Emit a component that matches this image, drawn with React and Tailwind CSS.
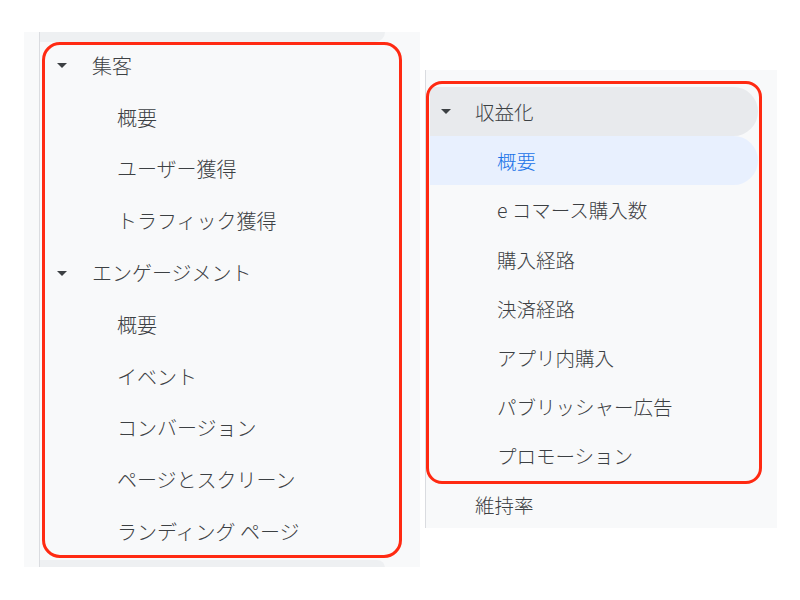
import React from "react";

const leftItems = [
  { label: "集客", header: true },
  { label: "概要" },
  { label: "ユーザー獲得" },
  { label: "トラフィック獲得" },
  { label: "エンゲージメント", header: true },
  { label: "概要" },
  { label: "イベント" },
  { label: "コンバージョン" },
  { label: "ページとスクリーン" },
  { label: "ランディング ページ" },
];

const rightItems = [
  { label: "収益化", header: true, open: true },
  { label: "概要", active: true },
  { label: "e コマース購入数" },
  { label: "購入経路" },
  { label: "決済経路" },
  { label: "アプリ内購入" },
  { label: "パブリッシャー広告" },
  { label: "プロモーション" },
  { label: "維持率", top: true },
];

const Caret = () => (
  <span className="block w-0 h-0 border-l-[5px] border-r-[5px] border-t-[5px] border-l-transparent border-r-transparent border-t-[#3c4043]" />
);

const App = () => {
  return (
    <div
      className="w-[800px] h-[600px] bg-white flex items-start pl-[24px] pt-[32px] text-[#3c4043] font-light"
      style={{ fontFamily: '"Noto Sans CJK JP", "Noto Sans", sans-serif' }}
    >
      {/* left panel */}
      <div className="relative w-[396px] h-[535px] bg-[#f8f9fa] pl-[15px] overflow-hidden">
        <div className="h-full border-l border-[#dadce0] flex flex-col">
          <div className="h-[10px] w-[345px] shrink-0 bg-[#eef0f2] rounded-br-[24px]" />
          <div className="flex flex-col -mt-[2px]">
            {leftItems.map((item, i) =>
              item.header ? (
                <div key={i} className="h-[51.8px] flex items-center text-[20px]">
                  <span className="ml-[17px] mr-[25px]">
                    <Caret />
                  </span>
                  {item.label}
                </div>
              ) : (
                <div key={i} className="h-[51.8px] flex items-center pl-[77px] text-[20px]">
                  {item.label}
                </div>
              )
            )}
          </div>
          <div className="mt-[2px] h-[8px] w-[345px] shrink-0 bg-[#eef0f2] rounded-tr-[24px]" />
        </div>
        <div className="absolute left-[18px] top-[10px] w-[360px] h-[516px] border-[3px] border-[#ff2a12] rounded-[18px]" />
      </div>

      {/* right panel */}
      <div className="relative mt-[38px] ml-[5px] w-[352px] h-[458px] bg-[#f8f9fa] overflow-hidden">
        <div className="h-full border-l border-[#dadce0] flex flex-col pt-[17px] pl-[4px]">
          {rightItems.map((item, i) =>
            item.header ? (
              <div
                key={i}
                className="h-[49.2px] shrink-0 flex items-center w-[328px] bg-[#e8eaed] rounded-r-full text-[19.5px]"
              >
                <span className="ml-[11px] mr-[24px]">
                  <Caret />
                </span>
                {item.label}
              </div>
            ) : item.top ? (
              <div key={i} className="h-[49.2px] shrink-0 flex items-center pl-[45px] text-[19.5px]">
                {item.label}
              </div>
            ) : (
              <div
                key={i}
                className={
                  item.active
                    ? "h-[49.2px] shrink-0 flex items-center w-[328px] pl-[67px] bg-[#e8f0fe] text-[#1a73e8] rounded-r-full text-[19.5px]"
                    : "h-[49.2px] shrink-0 flex items-center pl-[67px] text-[19.5px]"
                }
              >
                {item.label}
              </div>
            )
          )}
        </div>
        <div className="absolute left-[1px] top-[11px] w-[336px] h-[403px] border-[3px] border-[#ff2a12] rounded-[16px]" />
      </div>
    </div>
  );
};

export default App;
